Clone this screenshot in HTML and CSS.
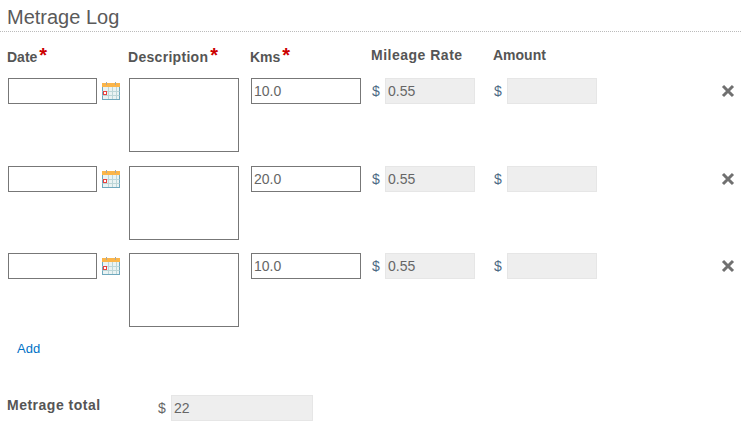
FILE: index.html
```html
<!DOCTYPE html>
<html lang="en">

<head>
    <meta charset="UTF-8">
    <title>Metrage Log</title>
    <link rel="stylesheet" href="styles.css">
</head>

<body>
    <svg class="sprites" width="0" height="0">
        <symbol id="cal" viewBox="0 0 18 18">
            <rect x="0.5" y="2.500" width="17" height="15" fill="#eaf3f3" stroke="#6fa8bd" />
            <rect x="0" y="1" width="18" height="4" fill="#fbb549" />
            <path d="M4.500 0v3M13.500 0v3" stroke="#a9a9a0" stroke-width="1" />
            <path d="M0.500 9.500h17M0.500 13.500h17M6.500 5v12M10.500 5v12M14.500 5v12" stroke="#bcd6d8" stroke-width="1" fill="none" />
            <rect x="1.500" y="9.500" width="3" height="3" fill="#fff" stroke="#e8413f" />
        </symbol>
        <symbol id="del" viewBox="0 0 14 14">
            <path d="M2 2l10 10M12 2L2 12" stroke="#707070" stroke-width="3" fill="none" />
        </symbol>
    </svg>

    <h1 class="title">Metrage Log</h1>

    <div class="log-grid">
        <div class="head">Date<span class="req">*</span></div>
        <div class="head head-desc">Description<span class="req">*</span></div>
        <div class="head">Kms<span class="req">*</span></div>
        <div class="head head-plain head-rate">Mileage Rate</div>
        <div class="head head-plain">Amount</div>
        <div></div>

        <div class="cell"><input class="field date" type="text"><svg class="cal-icon"><use href="#cal" /></svg></div>
        <div class="cell"><textarea class="notes"></textarea></div>
        <div class="cell"><input class="field wide" type="text" value="10.0"></div>
        <div class="cell"><span class="cur">$</span><input class="field locked" type="text" value="0.55" readonly></div>
        <div class="cell"><span class="cur">$</span><input class="field locked" type="text" readonly></div>
        <div class="cell end"><svg class="del-icon"><use href="#del" /></svg></div>

        <div class="cell"><input class="field date" type="text"><svg class="cal-icon"><use href="#cal" /></svg></div>
        <div class="cell"><textarea class="notes"></textarea></div>
        <div class="cell"><input class="field wide" type="text" value="20.0"></div>
        <div class="cell"><span class="cur">$</span><input class="field locked" type="text" value="0.55" readonly></div>
        <div class="cell"><span class="cur">$</span><input class="field locked" type="text" readonly></div>
        <div class="cell end"><svg class="del-icon"><use href="#del" /></svg></div>

        <div class="cell"><input class="field date" type="text"><svg class="cal-icon"><use href="#cal" /></svg></div>
        <div class="cell"><textarea class="notes"></textarea></div>
        <div class="cell"><input class="field wide" type="text" value="10.0"></div>
        <div class="cell"><span class="cur">$</span><input class="field locked" type="text" value="0.55" readonly></div>
        <div class="cell"><span class="cur">$</span><input class="field locked" type="text" readonly></div>
        <div class="cell end"><svg class="del-icon"><use href="#del" /></svg></div>
    </div>

    <a class="add" href="#">Add</a>

    <div class="total">
        <div class="total-label">Metrage total</div>
        <span class="cur">$</span><input class="field locked long" type="text" value="22" readonly>
    </div>
</body>

</html>
```

FILE: styles.css
```css
body {
    margin: 0;
    font-family: "Liberation Sans", Arial, sans-serif;
    font-size: 14px;
    color: #555;
    background-color: #fff;
}

.sprites {
    display: block;
    height: 0;
}

.title {
    margin: 0;
    padding: 4px 0 0 7px;
    height: 27px;
    font-size: 20px;
    line-height: 27px;
    font-weight: normal;
    color: #5a5a5a;
    border-bottom: 1px dotted #bbb;
}

/* Log rows */
.log-grid {
    display: grid;
    grid-template-columns: 121px 122px 121px 122px 214px 34px;
    padding: 0 0 0 7px;
    row-gap: 13.5px;
}

.head {
    height: 35.7px;
    padding-top: 16px;
    margin-bottom: -3px;
    box-sizing: border-box;
    font-weight: bold;
    font-size: 14px;
    line-height: 17px;
    color: #555;
}

.head-plain {
    padding-top: 15px;
}

.head-desc {
    letter-spacing: 0.3px;
}

.head-rate {
    letter-spacing: 0.5px;
}

.req {
    color: #c00;
    font-size: 20px;
    line-height: 14px;
    margin-left: 2px;
}

.cell {
    display: flex;
    align-items: flex-start;
    height: 74px;
    padding-left: 1px;
}

.end {
    justify-content: flex-end;
}

.field {
    width: 90px;
    height: 26px;
    box-sizing: border-box;
    margin: 0;
    padding: 0 2px;
    font-family: inherit;
    font-size: 14px;
    color: #666;
    border: 1px solid #777;
    background-color: #fff;
    border-radius: 0;
    outline: none;
}

.date {
    width: 89px;
}

.wide {
    width: 110px;
}

.locked {
    border-color: #e6e6e6;
    background-color: #eee;
}

.long {
    width: 142px;
}

.notes {
    display: block;
    width: 110px;
    height: 74px;
    box-sizing: border-box;
    margin: 0;
    border: 1px solid #777;
    resize: none;
}

.cur {
    width: 13px;
    line-height: 26px;
    color: #4d6a85;
}

.cal-icon {
    width: 18px;
    height: 18px;
    margin: 4px 0 0 5px;
}

.del-icon {
    width: 14px;
    height: 14px;
    margin: 6px 6px 0 0;
}

.add {
    display: block;
    margin: 14px 0 0 17px;
    width: 30px;
    font-size: 13px;
    line-height: 16px;
    color: #0072c6;
    text-decoration: none;
}

/* Total */
.total {
    display: flex;
    margin: 38px 0 0 7px;
}

.total-label {
    width: 151px;
    font-weight: bold;
    font-size: 14px;
    line-height: 20px;
    letter-spacing: 0.5px;
    color: #555;
}

.total .cur {
    color: #666;
}
```
